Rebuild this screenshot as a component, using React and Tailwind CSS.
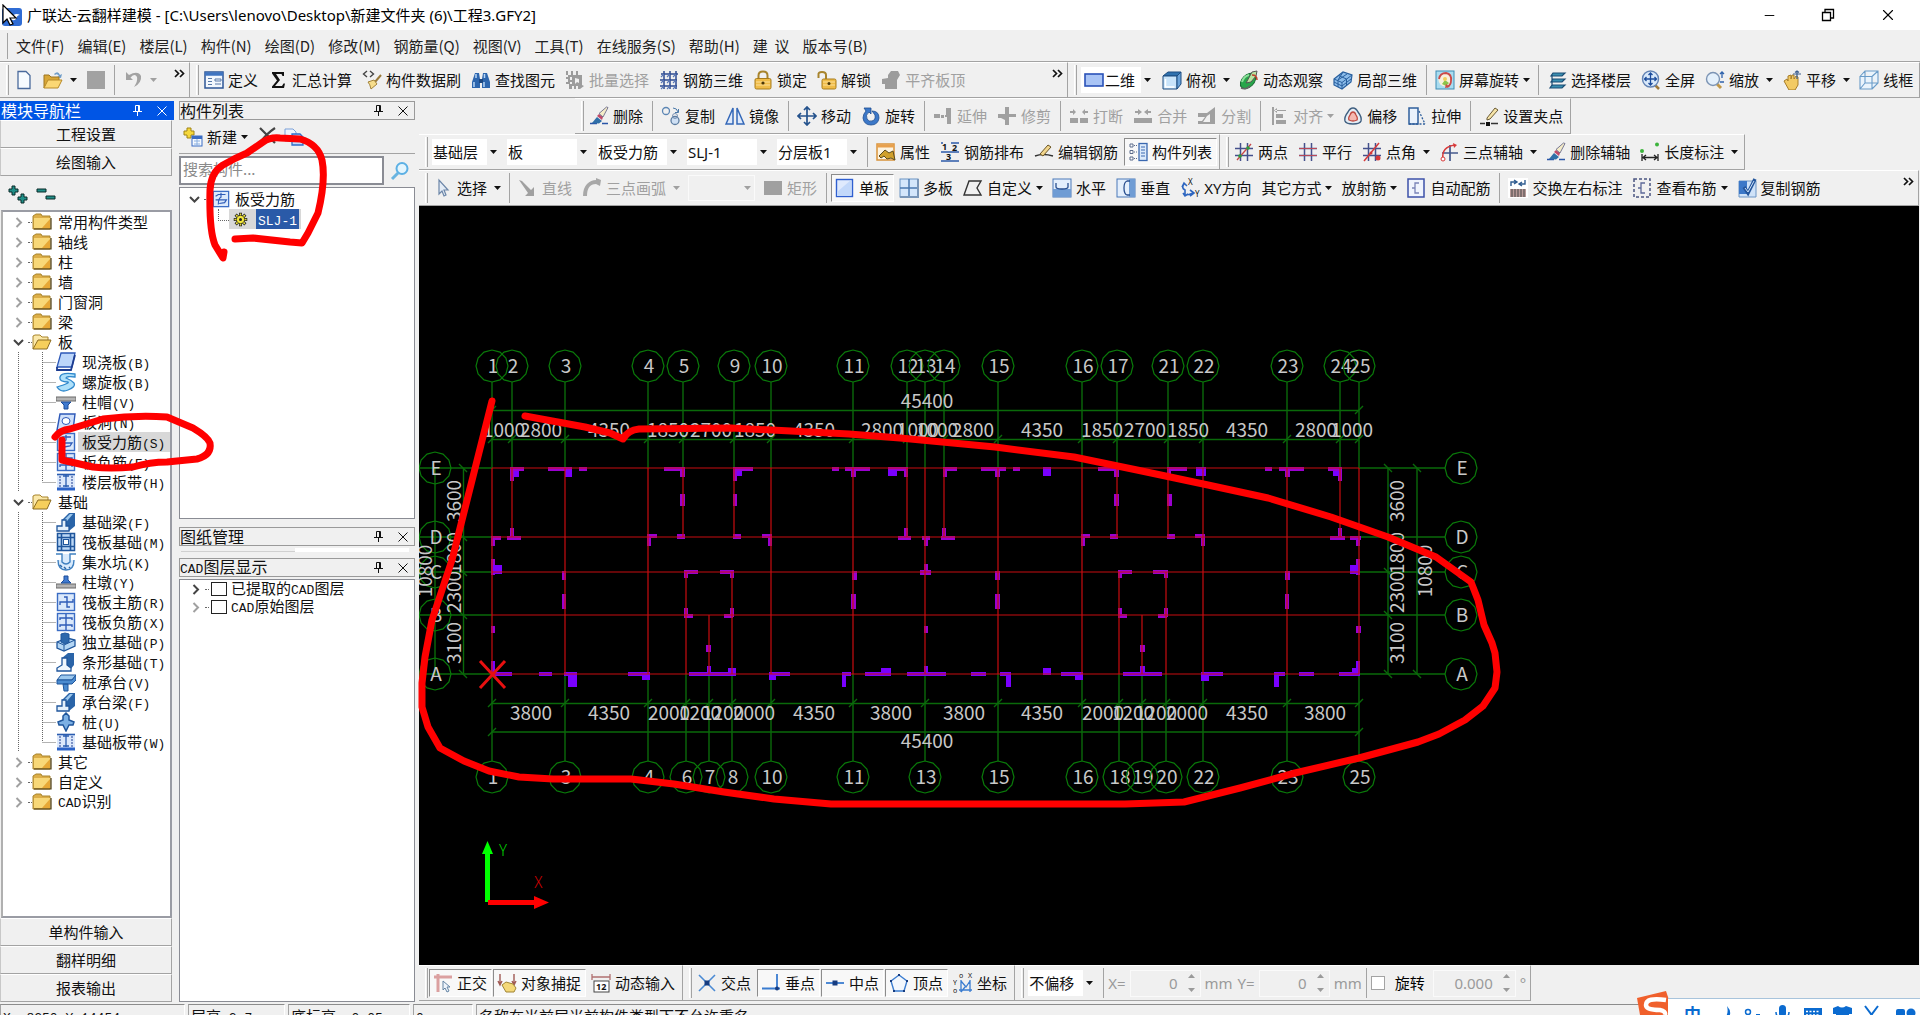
import { Fragment } from 'react';
import { Minus, X } from 'lucide-react';

const UI = "font-['Noto_Sans','Noto_Sans_CJK_SC',sans-serif]";
const CJK = "font-['Noto_Sans_CJK_SC',sans-serif]";

/* ---------- Iconos (cuadrícula 20x20) ---------- */

const eraser = (
  <>
    <path d="M1 17.500h7M13 17.500h6" stroke="#2a56a8" strokeWidth="1.500" />
    <path d="M3 17l5-6 5 4-3 2.500z" fill="#2f6fa8" />
    <path d="M8 10l5 4 1-3-4-3z" fill="#c04a68" />
    <path d="M10 7.500l4 3.500 5-9.500-1.500-.5z" fill="#f4ecc8" stroke="#5a5a80" strokeWidth=".8" />
  </>
);

const bluePlate = <rect x="1.500" y="1.500" width="17" height="17" fill="#dbe9fb" stroke="#3a6cc4" strokeWidth="1.400" />;

const gridLines = <path d="M6.500 1v18M13.500 1v18M1 6.500h18M1 13.500h18" stroke="#44508c" strokeWidth="1.500" fill="none" />;

const beam = (
  <>
    <path d="M6 8l7-7h6v13l-6 5z" fill="#2a64a8" />
    <path d="M8 8l6-6h3l-6 7z" fill="#9cc8ee" />
    <path d="M1 19v-5h5V8h4v6h3v5z" fill="#e4f0fc" stroke="#1f569c" strokeWidth="1.300" />
  </>
);

const strip = (
  <>
    <rect x="1" y="2" width="18" height="16" fill="#dce8fb" />
    <path d="M1 2.500h18" stroke="#2a5cb0" strokeWidth="1.600" />
    <path d="M1 17h18" stroke="#2a62c8" strokeWidth="3" />
    <path d="M4 4v11M16 4v11" stroke="#1c3c90" strokeDasharray="2 1" />
    <path d="M10 3v12M7 4h6M7 14h6" stroke="#2a5cb0" strokeWidth="1.300" />
  </>
);

const ICONS = {
  newDoc: <path d="M4 1.500h8l4 4v13H4z" fill="#f7fbff" stroke="#4a6a9c" strokeWidth="1.300" />,
  open: (
    <>
      <path d="M11 4q4-4 6 1l2-1-1 4-4-1 2-1q-2-3-4-1z" fill="#6f9cc8" />
      <path d="M1 18V5h5l2 2h8v4H6z" fill="#d8a636" stroke="#9c7420" />
      <path d="M1 18l4-8h14l-4 8z" fill="#fbd774" stroke="#b88a28" />
    </>
  ),
  save: <rect x="1" y="1" width="18" height="18" fill="#a2a2a2" />,
  undo: <path d="M3 2v8h7L7.500 7.500Q12 3 14 7q1 4-3 10 8-4 7-11Q15 0 6 5z" fill="#a2a2a2" />,
  define: (
    <>
      <rect x="1" y="2" width="18" height="16" fill="#f2f7fd" stroke="#2c5696" strokeWidth="1.500" />
      <path d="M1 4h18" stroke="#3f74c0" strokeWidth="3.500" />
      <path d="M4 8.500h4M4 11.500h4M4 14.500h4M11 9h6v2h-6zM11 14h6" stroke="#5879a8" fill="none" />
    </>
  ),
  sigma: <path d="M4 2h12v4h-1.500L13.500 4H8l4 6-5 6h7l1.500-2.500H17L16 18H4v-1.500L9 10.500 4 3.500z" fill="#111" />,
  brush: (
    <>
      <path d="M5 1L1.500 4 5 7M8 1l3.500 3L8 7" stroke="#444" strokeWidth="1.400" fill="none" />
      <path d="M19 5l-6 7" stroke="#9a7a3a" strokeWidth="2" />
      <path d="M6 12l6-2 3 4-6 5q-1-5-3-7z" fill="#f6dd8c" stroke="#a2823a" />
    </>
  ),
  binoculars: (
    <>
      <path d="M1 18v-6L4 3h4l1 6v9zM11 18V9l1-6h4l3 9v6z" fill="#2d66ae" />
      <path d="M3 12v5M13 12v5M5 4v4M13.500 4v4" stroke="#b8d6f6" strokeWidth="1.500" />
      <path d="M8 9h4v4H8z" fill="#1c4780" />
    </>
  ),
  batch: <path d="M1 1h2v4h3V1h2v4h3V1h2v4h4v10l2 1-4 3h-2v-3h-2v3H9v-3H7v3H4v-5H1v-2h2v-3H1V7h2V5H1zM5 7v3h2V7zM5 12v2h2v-2zM10 8v6l2-2 2 1V9z" fillRule="evenodd" fill="#9c9c9c" />,
  rebar3d: (
    <>
      <path d="M2 4h17M1 10h17M1 16h17M5 1v18M11 1v18M17 1v18" stroke="#2c4a90" strokeWidth="1.500" fill="none" />
      <path d="M2 7l3-3M8 7l3-3M14 7l3-3M2 13l3-3M8 13l3-3M14 13l3-3M2 19l3-3M8 19l3-3M14 19l3-3" stroke="#5a78b8" strokeWidth="1.100" fill="none" />
    </>
  ),
  lock: (
    <>
      <path d="M5.500 9V5.500q0-4 4.500-4t4.500 4V9" stroke="#a8842c" strokeWidth="2" fill="none" />
      <rect x="2" y="8.500" width="16" height="10.500" rx="1.500" fill="#f0bc48" stroke="#a87c1c" />
      <path d="M3 12h14M3 15h14" stroke="#fce09a" />
      <circle cx="10" cy="13" r="1.600" fill="#4a3608" />
    </>
  ),
  unlock: (
    <>
      <path d="M9 10V5q0-3-4-3T1.500 5v3" stroke="#a8842c" strokeWidth="2" fill="none" />
      <rect x="5" y="9" width="14" height="10" rx="1.500" fill="#f0bc48" stroke="#a87c1c" />
      <path d="M6 12h12M6 15h12" stroke="#fce09a" />
      <circle cx="12" cy="13.500" r="1.500" fill="#4a3608" />
    </>
  ),
  flush: <path d="M1 14V9l6-1V5l3-4h7l2 4-3 5v9H4v-5z" fill="#9c9c9c" />,
  rect2d: <rect x="1" y="4" width="18" height="12" fill="#a9c4f5" stroke="#2a52b8" strokeWidth="1.600" />,
  cube: (
    <>
      <path d="M1 6l5-4h13l-4 4z" fill="#2f71ae" stroke="#1c4c80" />
      <path d="M1 6h14v13H1z" fill="#c9e4fa" stroke="#1c4c80" />
      <path d="M15 6l4-4v12l-4 5z" fill="#6aa2d8" stroke="#1c4c80" />
      <path d="M3.500 9v8h9" stroke="#fff" strokeWidth="1.500" fill="none" />
    </>
  ),
  orbit: (
    <>
      <ellipse cx="9" cy="11" rx="9" ry="6" transform="rotate(-45 9 11)" fill="#27a64a" stroke="#1a6a34" />
      <path d="M3 12q2-6 7-7" stroke="#8ce09a" strokeWidth="2" fill="none" />
      <path d="M7 13l6-11 5-1-1 5-5 6z" fill="#b8e4a0" stroke="#555" />
      <path d="M13 5q5 0 5 5" stroke="#c0402a" strokeWidth="1.500" fill="none" />
      <path d="M2 18q5 2 9-2" stroke="#666" strokeWidth="1.500" fill="none" />
    </>
  ),
  local3d: (
    <>
      <path d="M1 9l9-7 9 3-1 7-9 7-8-4z" fill="#8cbcea" stroke="#285f9e" strokeWidth="1.200" />
      <path d="M1 9l8 3.500L19 5M9 12.500V19M5.500 5.500l8 3.500v6M1 12l8 4 9-7M5 10.500V17M10 2l-5 8M14 4l-9 6" stroke="#285f9e" fill="none" />
    </>
  ),
  screenRotate: (
    <>
      <rect x="1" y="1" width="18" height="18" fill="#a9dcf0" stroke="#3c8cb4" />
      <circle cx="10" cy="10" r="6.500" fill="#f8f0dc" />
      <path d="M4 9q1-6 7-6 6 1 5 8 0 4-4 6" stroke="#cc4a48" strokeWidth="1.800" fill="none" />
      <path d="M7 14l3-4 4 3-3 3z" fill="#8cc44a" />
      <circle cx="10" cy="9" r="2" fill="#f2ce5c" />
      <path d="M10 18l1-4 4 3z" fill="#cc4a48" />
    </>
  ),
  floors: <path d="M6 3h12l-3 3H4zM6 9h12l-3 3H4zM5 15h13l-3 3H3zM5 5v5M5 11v5" fill="#3a8fb0" stroke="#1a4c74" strokeWidth="1.200" />,
  fullscreen: (
    <>
      <path d="M14 15l4 4" stroke="#a07a3c" strokeWidth="2.500" />
      <circle cx="9.500" cy="9" r="8" fill="#d9e9fa" stroke="#6484b4" strokeWidth="1.400" />
      <path d="M9.500 3v12M3.500 9h12M7.500 5l2-2 2 2M7.500 13l2 2 2-2M5.500 7l-2 2 2 2M13.500 7l2 2-2 2" stroke="#1c4c9c" strokeWidth="1.300" fill="none" />
    </>
  ),
  zoomTool: (
    <>
      <path d="M12 14l4 4" stroke="#c09848" strokeWidth="3" />
      <circle cx="8" cy="9" r="6.500" fill="#e4f0fb" stroke="#7c94b4" strokeWidth="1.400" />
      <path d="M17 2v6M15 4l2-2 2 2M15 12h4" stroke="#2e62ac" strokeWidth="1.300" fill="none" />
    </>
  ),
  pan: (
    <>
      <path d="M2 11l3-2 1 2V6l3-1v4l1-4h2v4l2-3 2 1v8l-3 5H7z" fill="#f2ca64" stroke="#a67c28" />
      <path d="M15 1v8M11 4h8M13 2.500L15 1l2 1.500" stroke="#3a5c8c" strokeWidth="1.200" fill="none" />
    </>
  ),
  wireframe: <path d="M1 6.500h12V19H1zM1 6.500L6 1h13v12l-6 6M13 6.500L19 1M6 1v12h13M6 13l-5 6" stroke="#6a9cc8" strokeWidth="1.100" fill="#eaf4fc" />,
  eraser,
  copy: (
    <>
      <circle cx="5" cy="5" r="3.500" fill="none" stroke="#5c86b4" strokeWidth="1.300" />
      <circle cx="14" cy="14.500" r="4" fill="#cfe0f4" stroke="#5c7ca0" strokeWidth="1.300" />
      <circle cx="14" cy="10" r="2.500" fill="none" stroke="#7c94b4" />
      <path d="M12 2q4 0 5 4M17.500 3v3.500H14" stroke="#4a78a8" fill="none" />
    </>
  ),
  mirror: <path d="M8 2v16H1zM12 2v16h7z" fill="#dfeafb" stroke="#3468b8" strokeWidth="1.500" />,
  move: <path d="M10 1v18M1 10h18M7 4l3-3 3 3M7 16l3 3 3-3M4 7l-3 3 3 3M16 7l3 3-3 3" stroke="#24528c" strokeWidth="1.700" fill="none" />,
  rotate: <path d="M3 2h7v6L8 6q-4 3-2 7 2 3 5 2 4-1 3-6l-3-4q7 0 7 7-1 7-8 7-7 0-8-7 0-4 3-7z" fill="#3c78c8" stroke="#1c4c90" strokeWidth=".8" />,
  extend: <path d="M1 8h6v4H1zM8 9h3v3H8zM13 2h5v16h-4v-7h-2V9h1z" fill="#a0a0a0" />,
  trim: <path d="M8 1h4v7h7v3h-7v8H8v-5l-4-2H1V8h7z" fill="#a0a0a0" />,
  breakIt: <path d="M1 12h8v5H1zM11 12h8v5h-8zM1 5h3V3l3 3-3 3V7H1zM19 5h-3V3l-3 3 3 3V7h3z" fill="#a0a0a0" />,
  merge: <path d="M1 12h18v5H1zM2 5h3V3l4 3-4 3V7H2zM18 5h-3V3l-4 3 4 3V7h3z" fill="#a0a0a0" />,
  split: <path d="M1 7h9l8-6v17H1v-3h4l3-4H1zM10 10l-4 6h7V8z" fill="#a0a0a0" />,
  align: <path d="M3 1h2v18H3zM6 4h11v1H6zM7 8h7v4H7zM7 14h10v4H7zM8 2l-3 2.500 3 2.500z" fill="#a0a0a0" />,
  offset: (
    <>
      <path d="M10 2q3 0 5 4 4 5 3 9-1 3-8 3t-8-3q-1-4 3-9 2-4 5-4z" fill="#e6edf4" stroke="#3f5f80" strokeWidth="1.400" />
      <path d="M10 6q2 0 3 3 2 3 1 5-4 2-8 0-1-2 1-5 1-3 3-3z" fill="#f6b8b0" stroke="#c04a40" strokeWidth="1.300" />
    </>
  ),
  stretch: (
    <>
      <path d="M2 2h9v16H2z" fill="#eaf2fc" stroke="#2f5f9c" strokeWidth="1.500" />
      <path d="M12 5l6 13M2 18h17" stroke="#2f5f9c" strokeDasharray="2 1.500" strokeWidth="1.300" />
    </>
  ),
  grip: (
    <>
      <path d="M1 17.500h5M12 17.500h7" stroke="#333" strokeWidth="1.300" />
      <path d="M7 16h4v4H7z" fill="#111" />
      <path d="M8 12l8-10 3 2-8 9-3 1z" fill="#f6e4a8" stroke="#6a5a34" />
    </>
  ),
  props: (
    <>
      <rect x="1" y="2" width="17" height="16" fill="#fdf3df" stroke="#d8923a" strokeWidth="1.500" />
      <path d="M1 4h17" stroke="#e8a04c" strokeWidth="3" />
      <path d="M3 14l6-6 4 3 4-2 2 9-4-2-4 1-3-3-3 2z" fill="#d0a02c" stroke="#5a4a1c" />
    </>
  ),
  arrange: (
    <>
      <path d="M1 10h18M1 19h18M11 1h8M1 1h2" stroke="#2c5aa8" strokeWidth="1.300" />
      <g fill="#111" fontSize="9" fontWeight="700">
        <text x="2" y="8">1</text>
        <text x="12" y="9">2</text>
        <text x="6" y="18">3</text>
      </g>
    </>
  ),
  editBar: (
    <>
      <path d="M1 14q8-3 18 0" stroke="#333" strokeWidth="1.500" fill="none" />
      <path d="M6 12l8-9 3 2-8 9z" fill="#f2d68c" stroke="#6a5424" />
    </>
  ),
  list: (
    <>
      <rect x="11" y="1.500" width="8" height="17" fill="#dceafb" stroke="#3a68b0" strokeWidth="1.300" />
      <path d="M13 5h4M13 8h4M13 11h4M13 14h4" stroke="#3a68b0" />
      <path d="M2 2h3v3H2zM2 8.500h3v3H2zM2 15h3v3H2z" fill="#fff" stroke="#5a6a8a" />
      <path d="M6 3.500h4M6 10h4M6 16.500h4" stroke="#5a6a8a" strokeDasharray="1 1" />
    </>
  ),
  twoPoint: (
    <>
      {gridLines}
      <path d="M3 18L17 2" stroke="#c84848" strokeWidth="1.300" />
      <circle cx="6" cy="14" r="1.800" fill="#2c9c3c" /><circle cx="14" cy="6" r="1.800" fill="#2c9c3c" />
    </>
  ),
  parallel: (
    <>
      {gridLines}
      <path d="M1 6.500h18M1 13.500h18" stroke="#b84858" strokeWidth="1.200" />
    </>
  ),
  pointAngle: (
    <>
      {gridLines}
      <path d="M2 19L17 1" stroke="#d83a3a" strokeWidth="1.500" />
      <circle cx="16" cy="16" r="2.500" fill="#d83a3a" /><circle cx="9" cy="11" r="1.500" fill="#d83a3a" />
    </>
  ),
  threePoint: (
    <>
      <path d="M11 3v16M3 11h16" stroke="#44588c" strokeWidth="1.700" />
      <path d="M4 17Q2 5 16 3" stroke="#d83a3a" strokeWidth="1.500" fill="none" />
      <circle cx="4" cy="17" r="2" fill="#fff" stroke="#d83a3a" /><path d="M14 1l4 2-3 3z" fill="#d83a3a" />
    </>
  ),
  lengthDim: (
    <>
      <path d="M2 12v7M18 12v7M3 15.500h14M6 13l-3 2.500 3 2.500M14 13l3 2.500-3 2.500" stroke="#222" strokeWidth="1.300" fill="none" />
      <circle cx="2" cy="9" r="2" fill="#3cb43c" /><circle cx="17" cy="2.500" r="2" fill="#3cb43c" />
    </>
  ),
  cursor: <path d="M6 2v14l3-3 2 5 2-1-2-5h4z" fill="#e4ecf6" stroke="#6c86a8" strokeWidth="1.200" />,
  line: <path d="M1 2l3 1 9 9 3-3v9H7l3-3z" fill="#a0a0a0" />,
  arc: <path d="M1 18q0-8 4-12 4-4 9-4V0l5 2-1 6-4-2Q5 6 5 18z" fill="#a8a8a8" />,
  rectGray: <rect x="1" y="3" width="18" height="14" fill="#a0a0a0" />,
  single: (
    <>
      <rect x="1.500" y="1.500" width="16" height="17" fill="#dfeafd" stroke="#2f5fd0" strokeWidth="1.400" />
      <path d="M2 14l14-12v16H2z" fill="#c2d8fa" />
    </>
  ),
  multi: (
    <>
      <rect x="1" y="1" width="18" height="18" fill="#d4e6fb" stroke="#6a94c4" />
      <path d="M10 1v18M1 10h18" stroke="#4a78b0" strokeWidth="1.500" />
      <path d="M19 1v18H1" stroke="#7a96b8" strokeWidth="2" fill="none" />
    </>
  ),
  custom: <path d="M6 3h12l-4 7 4 7H1z" fill="none" stroke="#333" strokeWidth="1.400" />,
  horiz: (
    <>
      <rect x="1" y="1" width="18" height="18" fill="#e4effc" stroke="#4a78b8" />
      <path d="M1 11h18v8H1z" fill="#6f9cd4" />
      <path d="M4 5v4q0 2 6 2t6-2V5" stroke="#2a5090" strokeWidth="1.300" fill="none" />
    </>
  ),
  vert: (
    <>
      <rect x="1" y="1" width="18" height="18" fill="#e4effc" stroke="#4a78b8" />
      <path d="M13 1h6v18h-6z" fill="#6f9cd4" />
      <path d="M14 3h-3Q8 4 8 10t3 7h3" stroke="#2a5090" strokeWidth="1.300" fill="none" />
    </>
  ),
  xy: (
    <>
      <path d="M4 6q-3 4 1 6v5q4 0 8-2M2 9l2-4 3 3M3 15l2 3 3-2M10 12l4 3-4 3" stroke="#2e66c0" strokeWidth="1.600" fill="none" />
      <g fill="#111" fontSize="8">
        <text x="8" y="7">X</text>
        <text x="15" y="19">Y</text>
      </g>
    </>
  ),
  auto: (
    <>
      <rect x="2" y="1" width="16" height="18" fill="#f0f4fd" stroke="#3c50a8" strokeWidth="1.500" />
      <path d="M13 5H9v10h4M9 10H6" stroke="#7a84b8" strokeWidth="1.300" fill="none" />
    </>
  ),
  swap: (
    <>
      <rect width="20" height="20" fill="#fff" />
      <path d="M3 8V4h5M6 2l3 2-3 2M17 2v4h-5M14 4l-3 2 3 2" stroke="#2f5c90" strokeWidth="1.400" fill="none" />
      <path d="M2 11h16v8H2z" fill="#b89a98" />
      <path d="M4 11v8M7 11v8M10 11v8M13 11v8M16 11v8" stroke="#444" />
    </>
  ),
  view: (
    <>
      <path d="M2 1h16v18H2z" fill="none" stroke="#4a5480" strokeWidth="1.500" strokeDasharray="3 2" />
      <path d="M13 5H9v10h4M9 10H6" stroke="#5c6898" strokeWidth="1.300" fill="none" />
    </>
  ),
  copyBar: (
    <>
      <path d="M2 3h17v16H2z" fill="#cfe2f8" stroke="#6a94c4" />
      <path d="M2 3h8v13H2z" fill="#3c78c8" />
      <path d="M7 9l4 6L18 1" stroke="#24569c" strokeWidth="3.500" fill="none" />
      <path d="M8 10l3 4 6-11" stroke="#cfe2f8" fill="none" />
    </>
  ),
  ortho: (
    <>
      <path d="M1 4h18M5 1v18" stroke="#dba0a0" strokeWidth="3" />
      <path d="M10 8v9l2-2 2 4 2-1-2-4h3z" fill="#eef4fb" stroke="#6484a4" />
    </>
  ),
  snap: (
    <>
      <path d="M3 1v12M17 1v9M1 8l2 4 2-4M15 8l2 4 2-4" stroke="#a05a54" strokeWidth="1.400" fill="none" />
      <path d="M5 12l4-3 7 2 3 4-2 4H9z" fill="#f4d878" stroke="#a08434" />
    </>
  ),
  dynInput: (
    <>
      <path d="M1 1v6M19 1v6M1 4h18" stroke="#b07070" strokeWidth="1.300" fill="none" />
      <rect x="3" y="8" width="15" height="11" fill="#fff" stroke="#444" />
      <text x="5" y="17" fontSize="9" fontWeight="700" fill="#111">12</text>
    </>
  ),
  cross: (
    <>
      <path d="M2 2l16 16M18 2L2 18" stroke="#4a8ad4" strokeWidth="1.600" fill="none" />
      <rect x="7.500" y="7.500" width="5" height="5" fill="#163c80" />
    </>
  ),
  perp: (
    <>
      <path d="M16 1v15M1 15.500h18" stroke="#3a7cd0" strokeWidth="1.800" />
      <circle cx="16" cy="15.500" r="2" fill="#163c80" />
    </>
  ),
  mid: (
    <>
      <path d="M1 10h18" stroke="#3a7cd0" strokeWidth="1.800" />
      <rect x="7.500" y="7.500" width="5" height="5" fill="#163c80" />
    </>
  ),
  vertex: (
    <>
      <path d="M10 2l8 6-3 10H5L2 8z" fill="#f2f7fd" stroke="#3a7cd0" strokeWidth="1.400" />
      <path d="M9 1h2v2H9zM17 7h2v2h-2zM1 7h2v2H1zM4 17h2v2H4zM14 17h2v2h-2z" fill="#163c80" />
    </>
  ),
  coord: (
    <>
      <path d="M8 7v12M6 17h13M8 8l5 6 4-6M17 7v12M12 14l-4 5" stroke="#3a7cd0" strokeWidth="1.300" fill="none" />
      <g fill="#111" fontSize="7">
        <text x="0" y="12">Y</text><text x="15" y="5">X</text>
        <text x="6" y="5">o</text><text x="0" y="20">o</text>
      </g>
    </>
  ),
  addNew: (
    <>
      <path d="M4 1h4v3h3v4H8v3H4V8H1V4h3z" fill="#f6d83c" stroke="#a08414" />
      <rect x="9" y="9" width="10" height="10" fill="#f4f9ff" stroke="#3a6cc4" />
      <path d="M9 10.500h10" stroke="#3a6cc4" strokeWidth="3" />
      <path d="M11 14h6M11 17h6M14 12v7" stroke="#8cb0e0" />
    </>
  ),
  remove: <path d="M2 1l15 15M17 1Q8 7 2 16" stroke="#444" strokeWidth="2.200" fill="none" />,
  copyDoc: (
    <>
      <path d="M1 2h8l3 3v9H1z" fill="#eef4fd" stroke="#7aa0d8" />
      <path d="M8 7h8l3 3v8H8z" fill="#c2dafa" stroke="#2f6cc8" strokeWidth="1.300" />
    </>
  ),
  search: (
    <>
      <path d="M2 18l6-6" stroke="#6ab4e0" strokeWidth="3" />
      <circle cx="12" cy="7.500" r="5.500" fill="#e4f5fd" stroke="#5cb0e4" strokeWidth="2" />
    </>
  ),
  expand: <path d="M4 1h3v3h3v3H7v3H4V7H1V4h3zM13 9h3v3h3v3h-3v3h-3v-3h-3v-3h3z" fill="#1f8f88" stroke="#0a2a28" />,
  collapse: <path d="M1 4h9v3H1zM10 11h9v3h-9z" fill="#1f8f88" stroke="#0a2a28" />,
  folder: (
    <>
      <path d="M1 17V4l3-2h5l1 2h8v13z" fill="#dcae48" stroke="#a8842c" />
      <path d="M2 16V6h16v10z" fill="#f8d878" />
      <path d="M2 17h17V6" stroke="#4a3a10" strokeWidth="1.200" fill="none" />
      <path d="M10 16l8-9v9z" fill="#e6a836" />
    </>
  ),
  folderOpen: (
    <>
      <path d="M1 17V4l2-1h5l2 2h6v3" fill="#fbe8a8" stroke="#a8842c" />
      <path d="M1 17L6 8h13l-4 9z" fill="#f6cf5c" stroke="#8c6c20" />
    </>
  ),
  slab: (
    <>
      <path d="M5 1h14l-3 14H1z" fill="#bcd6fa" stroke="#2c58b8" strokeWidth="1.300" />
      <path d="M1 15v3h14l4-15" fill="none" stroke="#1c3c90" strokeWidth="1.800" />
    </>
  ),
  spiral: <path d="M19 2Q5 0 4 5t8 5q2 1-11 5 4 6 11 3 8-3 6-7-3-3-8-5 0-2 9-1z" fill="#aee0fa" stroke="#2f88cc" strokeWidth="1.300" />,
  cap: (
    <>
      <rect y="5" width="20" height="4" fill="#b4b4b4" stroke="#6a6a6a" />
      <path d="M5 10h10l-3 3v4H8v-4z" fill="#3f7ad0" stroke="#1c4c98" />
    </>
  ),
  hole: (
    <>
      <path d="M4 2h15l-2 16H1z" fill="#cfe0fa" stroke="#2c58b8" strokeWidth="1.400" />
      <ellipse cx="10" cy="9" rx="4" ry="3.500" fill="#fff" stroke="#2c58b8" />
    </>
  ),
  slabBar: (
    <>
      {bluePlate}
      <path d="M4 7l3-2h8M4 11h12l-2 3-6 1M10 3v5q-3 1-3 8" stroke="#2f5cb8" strokeWidth="1.300" fill="none" />
    </>
  ),
  mainBar: (
    <>
      {bluePlate}
      <path d="M8 5h3v10h3M4 13v-3h13V7" stroke="#2f5cb8" strokeWidth="1.400" fill="none" />
    </>
  ),
  negBar: (
    <>
      {bluePlate}
      <path d="M10 2v16M4 8v-2h12v2M4 15v-2h12v2" stroke="#2f5cb8" strokeWidth="1.400" fill="none" />
    </>
  ),
  strip,
  beam,
  raft: (
    <>
      <rect x="1.500" y="1.500" width="17" height="17" fill="#bcd8f6" stroke="#1f569c" strokeWidth="1.500" />
      <path d="M5.500 1v18M14.500 1v18M1 5.500h18M1 14.500h18" stroke="#1f569c" strokeWidth="1.600" />
      <rect x="7.500" y="7.500" width="5" height="5" fill="#fff" stroke="#1f569c" />
    </>
  ),
  pit: (
    <>
      <path d="M0 2h6v8q4 4 8 0V2h6M2 8q0 10 8 10t8-10" fill="#d8eafc" stroke="#3f80c0" strokeWidth="1.400" />
      <path d="M4 13l2 2M8 15l2 2M13 15l1 1" stroke="#2a66a8" strokeWidth="1.500" />
    </>
  ),
  pier: (
    <>
      <rect y="12" width="20" height="4" fill="#b4b4b4" stroke="#6a6a6a" />
      <path d="M5 11l3-3V4h4v4l3 3z" fill="#3f7ad0" stroke="#1c4c98" />
    </>
  ),
  isolated: (
    <>
      <path d="M1 10l10-4 8 2v6l-11 5-7-3z" fill="#b4d6f4" stroke="#1f569c" strokeWidth="1.300" />
      <path d="M1 10l7 3 11-5M8 13v6" stroke="#1f569c" />
      <path d="M5 2l4-1 4 1v8l-4 2-4-2z" fill="#2d68ac" stroke="#1f569c" />
    </>
  ),
  stripF: (
    <>
      <path d="M6 6l6-5h6v12l-4 5z" fill="#2a64a8" />
      <path d="M1 19v-3l5-3V6h5v7l4 3v3z" fill="#f0f7fd" stroke="#1f569c" strokeWidth="1.300" />
    </>
  ),
  pileCap: (
    <>
      <path d="M1 8l4-5h15l-4 5z" fill="#9cc8ee" stroke="#1f569c" />
      <path d="M1 8h15l4-5v5l-4 4H1zM7 12h5v7H8z" fill="#4c8cd0" stroke="#1f569c" />
    </>
  ),
  pile: <path d="M7 8V4l3-3 3 3v4l5 2-1 3h-4l-3 6-3-6H3l-1-3z" fill="#7cb0e4" stroke="#1f569c" strokeWidth="1.500" />,
  gear: (
    <>
      <path d="M10 1v18M1 10h18M3.500 3.500l13 13M16.500 3.500l-13 13" stroke="#222" strokeWidth="4" />
      <path d="M10 2v16M2 10h16M4.200 4.200l11.600 11.600M15.800 4.200L4.200 15.800" stroke="#f4e83c" strokeWidth="2" />
      <circle cx="10" cy="10" r="5.500" fill="#f4e83c" stroke="#222" /><circle cx="10" cy="10" r="2" fill="#222" />
    </>
  ),
};

function Icon({ name, className = 'size-5' }) {
  return (
    <svg className={`${className} shrink-0`} viewBox="0 0 20 20" fill="none" aria-hidden="true">
      {ICONS[name]}
    </svg>
  );
}

function Caret({ muted }) {
  return (
    <svg className="w-[7px] h-1 shrink-0" viewBox="0 0 7 4" aria-hidden="true">
      <path d="M0 0h7L3.500 4z" fill={muted ? '#a0a0a0' : '#111'} />
    </svg>
  );
}

/* ---------- Piezas de las barras ---------- */

function Bar({ className = '', children }) {
  return (
    <div className={`flex h-9 items-center gap-px pl-1.5 pr-0.5 border-t border-t-white border-b border-r border-b-[#a3a3a3] border-r-[#a3a3a3] ${className}`}>
      <span className="h-[30px] w-[3px] shrink-0 border-l border-l-white border-r border-r-[#a3a3a3]" />
      {children}
    </div>
  );
}

function Sep() {
  return <span className="h-[30px] w-px shrink-0 mx-[3px] bg-[#a3a3a3]" />;
}

// caret: 'tight' pegado al texto, 'split' separado
function Tool({ icon, label, title, caret, muted, pressed }) {
  const state = pressed
    ? 'border-t-[#8c8c8c] border-l-[#8c8c8c] border-b-white border-r-white bg-[#f8f8f8]'
    : 'border-transparent';
  return (
    <button
      type="button"
      disabled={muted}
      aria-pressed={pressed}
      aria-label={title}
      className={`flex h-7 shrink-0 items-center border px-[3px] whitespace-pre ${state} ${muted ? 'text-[#a0a0a0]' : 'text-[#111]'}`}
    >
      {icon && <Icon name={icon} />}
      {label && <span className={icon ? 'ml-1' : ''}>{label}</span>}
      {caret && (
        <span className={caret === 'split' ? 'ml-[7px]' : 'ml-1'}>
          <Caret muted={muted} />
        </span>
      )}
      {!caret && icon && label && <span className="w-px" />}
    </button>
  );
}

function Tools({ items }) {
  return items.map((it, i) => (it === '|' ? <Sep key={i} /> : <Tool key={i} {...it} />));
}

function Combo({ label, value, width, icon, muted }) {
  return (
    <span className={`flex h-[26px] shrink-0 items-center mx-[3px] ${width} ${muted ? 'bg-[#f0f0f0] border border-[#fafafa]' : 'bg-white'}`}>
      {icon && <span className="pl-[3px]"><Icon name={icon} /></span>}
      <select aria-label={label} disabled={muted} className="min-w-0 flex-1 appearance-none bg-transparent pl-px text-[#111] outline-none">
        <option>{value}</option>
      </select>
      <span className="flex h-full w-[13px] items-center justify-center bg-[#f0f0f0]">
        <Caret muted={muted} />
      </span>
    </span>
  );
}

function More() {
  return (
    <button type="button" aria-label="更多" className="ml-auto mr-0.5 mt-1.5 self-start">
      <svg className="w-[11px] h-[9px]" viewBox="0 0 11 9" fill="none" stroke="#111" strokeWidth="1.700">
        <path d="M1 1l3.500 3.500L1 8M6 1l3.500 3.500L6 8" />
      </svg>
    </button>
  );
}

function Spin({ label, value, width }) {
  return (
    <span className={`flex h-[27px] shrink-0 items-center mx-[3px] border border-[#fafafa] pr-[5px] ${width}`}>
      <input aria-label={label} defaultValue={value} disabled className="min-w-0 flex-1 bg-transparent pr-[10px] text-right text-[#9a9a9a]" />
      <svg className="w-[7px] h-5" viewBox="0 0 7 20" fill="#9a9a9a" aria-hidden="true">
        <path d="M0 5l3.500-4L7 5zM0 15l3.500 4L7 15z" />
      </svg>
    </span>
  );
}

/* ---------- Barras superiores ---------- */

const MENUS = ['文件(F)', '编辑(E)', '楼层(L)', '构件(N)', '绘图(D)', '修改(M)', '钢筋量(Q)', '视图(V)', '工具(T)', '在线服务(S)', '帮助(H)', '建  议', '版本号(B)'];

const FILE_TOOLS = [
  { icon: 'newDoc', title: '新建' }, { icon: 'open', title: '打开', caret: 'split' }, { icon: 'save', title: '保存', muted: true },
  '|', { icon: 'undo', title: '撤销', caret: 'split', muted: true },
];
const DATA_TOOLS = [
  { icon: 'define', label: '定义' }, { icon: 'sigma', label: '汇总计算' }, { icon: 'brush', label: '构件数据刷' },
  { icon: 'binoculars', label: '查找图元' }, { icon: 'batch', label: '批量选择', muted: true }, { icon: 'rebar3d', label: '钢筋三维' },
  { icon: 'lock', label: '锁定' }, { icon: 'unlock', label: '解锁' }, { icon: 'flush', label: '平齐板顶', muted: true },
];
const VIEW_TOOLS = [
  { icon: 'cube', label: '俯视', caret: 'split' }, { icon: 'orbit', label: '动态观察' }, { icon: 'local3d', label: '局部三维' },
  '|', { icon: 'screenRotate', label: '屏幕旋转', caret: 'tight' },
  '|', { icon: 'floors', label: '选择楼层' }, { icon: 'fullscreen', label: '全屏' }, { icon: 'zoomTool', label: '缩放', caret: 'split' },
  { icon: 'pan', label: '平移', caret: 'split' }, { icon: 'wireframe', label: '线框' },
];
const EDIT_TOOLS = [
  { icon: 'eraser', label: '删除' }, '|', { icon: 'copy', label: '复制' }, { icon: 'mirror', label: '镜像' },
  '|', { icon: 'move', label: '移动' }, { icon: 'rotate', label: '旋转' },
  '|', { icon: 'extend', label: '延伸', muted: true }, { icon: 'trim', label: '修剪', muted: true },
  '|', { icon: 'breakIt', label: '打断', muted: true }, { icon: 'merge', label: '合并', muted: true }, { icon: 'split', label: '分割', muted: true },
  '|', { icon: 'align', label: '对齐', muted: true, caret: 'tight' }, { icon: 'offset', label: '偏移' }, { icon: 'stretch', label: '拉伸' },
  '|', { icon: 'grip', label: '设置夹点' },
];
const MEMBER_TOOLS = [
  '|', { icon: 'props', label: '属性' }, { icon: 'arrange', label: '钢筋排布' }, { icon: 'editBar', label: '编辑钢筋' },
  { icon: 'list', label: '构件列表', pressed: true },
];
const AXIS_TOOLS = [
  { icon: 'twoPoint', label: '两点' }, { icon: 'parallel', label: '平行' }, { icon: 'pointAngle', label: '点角', caret: 'split' },
  { icon: 'threePoint', label: '三点辅轴', caret: 'split' }, { icon: 'eraser', label: '删除辅轴' }, { icon: 'lengthDim', label: '长度标注', caret: 'split' },
];
const DRAW_TOOLS_A = [
  { icon: 'cursor', label: '选择', caret: 'split' }, '|',
  { icon: 'line', label: '直线', muted: true }, { icon: 'arc', label: '三点画弧', muted: true, caret: 'split' },
];
const DRAW_TOOLS_B = [
  { icon: 'rectGray', label: '矩形', muted: true }, '|',
  { icon: 'single', label: '单板', pressed: true }, { icon: 'multi', label: '多板' }, { icon: 'custom', label: '自定义', caret: 'tight' },
  { icon: 'horiz', label: '水平' }, { icon: 'vert', label: '垂直' }, { icon: 'xy', label: 'XY方向' },
  { label: '其它方式', caret: 'tight' }, { label: '放射筋', caret: 'tight' }, { icon: 'auto', label: '自动配筋' }, '|',
  { icon: 'swap', label: '交换左右标注' }, { icon: 'view', label: '查看布筋', caret: 'tight' }, { icon: 'copyBar', label: '复制钢筋' },
];

function TitleBar() {
  return (
    <header className="flex h-[30px] shrink-0 items-center bg-white text-black">
      <svg className="size-[22px] shrink-0" viewBox="0 0 22 22" aria-hidden="true">
        <rect x="2" y="4" width="20" height="18" rx="3" fill="#2f6cd4" />
        <path d="M10 14q5-6 10-3-3 0-4 4-3 3-6-1z" fill="#fff" />
        <path d="M3 1v18l4-4 3 6 3-1-3-6h6z" fill="#fff" stroke="#000" strokeWidth="1.200" />
      </svg>
      <h1 className="ml-[5px] flex-1">广联达-云翻样建模 - [C:\Users\lenovo\Desktop\新建文件夹 (6)\工程3.GFY2]</h1>
      <div className="flex items-center gap-11 pr-[23px]">
        <button type="button" aria-label="最小化"><Minus className="size-[15px]" strokeWidth={1.5} /></button>
        <button type="button" aria-label="还原">
          <svg className="size-[14px]" viewBox="0 0 14 14" fill="none" stroke="#000" strokeWidth="1.300">
            <path d="M1.500 4.500h8v8h-8zM4 4V1.500h8.500V10H10" />
          </svg>
        </button>
        <button type="button" aria-label="关闭"><X className="size-[18px]" strokeWidth={1.5} /></button>
      </div>
    </header>
  );
}

/* ---------- Paneles acoplados ---------- */

// Los tramos latinos van en monoespaciada, como en una fuente Song
function Song({ children }) {
  return children.split(/([\x20-\x7e]+)/).map((part, i) =>
    i % 2 ? <span key={i} className="font-['Liberation_Mono',monospace] text-[13px]">{part}</span> : <Fragment key={i}>{part}</Fragment>
  );
}

function PanelHead({ title, active }) {
  return (
    <div className={`flex h-[19px] shrink-0 items-center border pr-1.5 ${active ? 'bg-[#0055e5] border-[#0055e5] text-white' : 'bg-[#f0f0f0] border-[#9a9a9a] text-[#111]'}`}>
      <h2 className="flex-1 text-[16px] leading-[17px] whitespace-nowrap"><Song>{title}</Song></h2>
      <button type="button" aria-label={`固定${title}`} className="mr-[14px]">
        <svg className="size-[11px]" viewBox="0 0 11 11" fill="none" stroke="currentColor">
          <path d="M3.500 6V.5h4V6M6.500 1v5M1 6.500h9M5.500 7v4" />
        </svg>
      </button>
      <button type="button" aria-label={`关闭${title}`}>
        <svg className="size-[10px]" viewBox="0 0 10 10" stroke="currentColor"><path d="M.5.5l9 9M9.500.5l-9 9" /></svg>
      </button>
    </div>
  );
}

function NavButton({ children }) {
  return (
    <button type="button" className="mr-0.5 h-7 shrink-0 border border-t-white border-l-[#c8c8c8] border-b-[#a3a3a3] border-r-[#a3a3a3] text-[#111]">
      {children}
    </button>
  );
}

const TREE = [
  { label: '常用构件类型' }, { label: '轴线' }, { label: '柱' }, { label: '墙' }, { label: '门窗洞' }, { label: '梁' },
  {
    label: '板',
    children: [
      ['slab', '现浇板(B)'], ['spiral', '螺旋板(B)'], ['cap', '柱帽(V)'], ['hole', '板洞(N)'],
      ['slabBar', '板受力筋(S)'], ['negBar', '板负筋(F)'], ['strip', '楼层板带(H)'],
    ],
  },
  {
    label: '基础',
    children: [
      ['beam', '基础梁(F)'], ['raft', '筏板基础(M)'], ['pit', '集水坑(K)'], ['pier', '柱墩(Y)'], ['mainBar', '筏板主筋(R)'],
      ['negBar', '筏板负筋(X)'], ['isolated', '独立基础(P)'], ['stripF', '条形基础(T)'], ['pileCap', '桩承台(V)'],
      ['beam', '承台梁(F)'], ['pile', '桩(U)'], ['strip', '基础板带(W)'],
    ],
  },
  { label: '其它' }, { label: '自定义' }, { label: 'CAD识别' },
];

function Chevron({ open, dim }) {
  return (
    <svg className="size-[11px] shrink-0" viewBox="0 0 11 11" fill="none" stroke={dim ? '#a0a0a0' : '#444'} strokeWidth="2" aria-hidden="true">
      <path d={open ? 'M1 3l4.500 4.500L10 3' : 'M3.500 1L8 5.500 3.500 10'} />
    </svg>
  );
}

function Branch({ last }) {
  return (
    <svg className="ml-[15px] w-[38px] h-5 shrink-0" viewBox="0 0 38 20" stroke="#666" strokeDasharray="1 1" aria-hidden="true">
      <path d={`M.5 0v20M24.500 0v${last ? 10 : 20}M24.500 10.500h14`} />
    </svg>
  );
}

function NavTree() {
  return (
    <ul className="min-h-0 flex-1 overflow-hidden border-2 border-[#9a9ca4] border-l-[#b0b0b0] bg-white ml-px mr-0.5">
      {TREE.map((node) => (
        <li key={node.label}>
          <div className="flex h-5 items-center pl-2.5 text-[#111]">
            <Chevron open={Boolean(node.children)} dim={!node.children} />
            <span className="ml-1 w-1 border-t border-dotted border-[#666]" />
            <Icon name={node.children ? 'folderOpen' : 'folder'} />
            <span className="ml-1.5"><Song>{node.label}</Song></span>
          </div>
          {node.children && (
            <ul>
              {node.children.map(([icon, label], i) => (
                <li key={label} className="flex h-5 items-center text-[#111]">
                  <Branch last={i === node.children.length - 1} />
                  <Icon name={icon} />
                  <span className={`ml-0.5 h-5 px-1 leading-5 whitespace-nowrap ${label === '板受力筋(S)' ? 'bg-[#d8d8d8] pr-1.5' : ''}`}>
                    <Song>{label}</Song>
                  </span>
                </li>
              ))}
            </ul>
          )}
        </li>
      ))}
    </ul>
  );
}

function Navigator() {
  return (
    <aside className="flex w-[174px] shrink-0 flex-col">
      <PanelHead title="模块导航栏" active />
      <NavButton>工程设置</NavButton>
      <NavButton>绘图输入</NavButton>
      <div className="flex h-[34px] shrink-0 items-center gap-2 pt-1 pl-2">
        <button type="button" aria-label="全部展开"><Icon name="expand" /></button>
        <button type="button" aria-label="全部折叠"><Icon name="collapse" /></button>
      </div>
      <NavTree />
      <NavButton>单构件输入</NavButton>
      <NavButton>翻样明细</NavButton>
      <NavButton>报表输出</NavButton>
    </aside>
  );
}

function MemberPanels() {
  return (
    <aside className="flex w-[236px] shrink-0 flex-col text-[#111]">
      <PanelHead title="构件列表" />
      <div className="flex h-[34px] shrink-0 items-center border-b border-[#a3a3a3]">
        <Tool icon="addNew" label="新建" caret="tight" />
        <button type="button" aria-label="删除构件" className="ml-1.5"><Icon name="remove" /></button>
        <button type="button" aria-label="复制构件" className="ml-1.5"><Icon name="copyDoc" /></button>
      </div>
      <div className="flex h-[33px] shrink-0 items-center">
        <input type="text" aria-label="搜索构件" placeholder="搜索构件..." className="h-[29px] w-[205px] border-2 border-[#8a8c94] bg-white px-0.5 pb-1 placeholder-[#8a8a8a]" />
        <button type="button" aria-label="搜索" className="ml-1.5"><Icon name="search" /></button>
      </div>
      <ul className="h-[332px] shrink-0 border border-[#8a8c94] bg-white pt-px">
        <li className="flex h-5 items-center pl-[9px]">
          <Chevron open />
          <span className="ml-1 w-2 border-t border-dotted border-[#666]" />
          <Icon name="slabBar" className="size-[18px]" />
          <span className="ml-[5px]">板受力筋</span>
        </li>
        <li className="flex h-5 items-center pl-[38px]">
          <span className="mb-2 h-3 w-[11px] border-b border-l border-dotted border-[#666]" />
          <span className="flex h-5 items-center bg-[#d8d8d8] pl-1 pr-0.5">
            <Icon name="gear" className="size-[15px]" />
            <span className="ml-2 h-5 bg-[#2a5aa8] px-0.5 leading-5 text-white"><Song>SLJ-1</Song></span>
          </span>
        </li>
      </ul>
      <div className="mt-2 flex flex-col">
        <PanelHead title="图纸管理" />
      </div>
      <div className="ml-0.5 mr-1.5 mt-0.5 flex h-1">
        <span className="flex-1 border-b border-[#d0d0d0]" />
        <span className="flex-1 bg-white" />
      </div>
      <div className="mt-1.5 flex flex-col">
        <PanelHead title="CAD图层显示" />
      </div>
      <ul className="mt-0.5 min-h-0 flex-1 border border-[#8a8c94] bg-white">
        {['已提取的CAD图层', 'CAD原始图层'].map((label, i) => (
          <li key={label} className="flex h-[18px] items-center pl-2.5">
            <Chevron dim={i === 1} />
            <span className="ml-1 w-1 border-t border-dotted border-[#666]" />
            <label className="flex items-center leading-[18px] whitespace-nowrap">
              <input type="checkbox" className="ml-0.5 mr-1 h-[14px] w-4 appearance-none border border-[#222] bg-white" />
              <span><Song>{label}</Song></span>
            </label>
          </li>
        ))}
      </ul>
    </aside>
  );
}

/* ---------- Plano ---------- */

const Y_AXES = { E: 468, D: 537, C: 572, B: 615, A: 674 };
const X_TOP = { 1: 492, 2: 512, 3: 565, 4: 648, 5: 683, 9: 734, 10: 771, 11: 853, 12: 907, 13: 925, 14: 944, 15: 998, 16: 1082, 17: 1117, 21: 1168, 22: 1203, 23: 1287, 24: 1340, 25: 1359 };
const X_BOTTOM = { 1: 492, 3: 565, 4: 648, 6: 686, 7: 709, 8: 732, 10: 771, 11: 853, 13: 925, 15: 998, 16: 1082, 18: 1119, 19: 1142, 20: 1166, 22: 1203, 23: 1287, 25: 1359 };
const DIM_TOP = [1000, 2800, 4350, 1850, 2700, 1850, 4350, 2800, 1000, 1000, 2800, 4350, 1850, 2700, 1850, 4350, 2800, 1000];
const DIM_BOTTOM = [3800, 4350, 2000, 1200, 1200, 2000, 4350, 3800, 3800, 4350, 2000, 1200, 1200, 2000, 4350, 3800];
const DIM_SIDE = [[3600, 501], [1800, 553], [2300, 592], [3100, 643]];

const RED_WALLS = [
  ...[492, 565, 648, 771, 853, 925, 998, 1082, 1203, 1287, 1359].map((x) => [x, 468, 674]),
  ...[512, 683, 734, 907, 944, 1117, 1168, 1340].map((x) => [x, 468, 537]),
  ...[686, 732, 1119, 1166].map((x) => [x, 572, 674]),
  [709, 615, 674], [1142, 615, 674],
];

// [x, y, ancho, alto]
const WALLS = [
  [512, 467, 12, 4], [510, 467, 4, 14], [548, 467, 24, 4], [579, 467, 8, 4], [664, 467, 21, 4], [680, 467, 5, 10], [680, 494, 5, 12],
  [677, 534, 8, 5], [733, 467, 20, 4], [733, 467, 4, 14], [733, 494, 4, 12], [733, 534, 8, 5], [832, 467, 7, 4], [845, 467, 25, 4],
  [851, 468, 5, 9], [888, 467, 20, 4], [904, 467, 4, 10], [943, 467, 14, 4], [943, 467, 4, 10], [510, 528, 4, 11], [507, 536, 14, 4],
  [491, 536, 10, 4], [491, 536, 4, 10], [647, 534, 10, 4], [647, 534, 4, 12], [762, 534, 10, 4], [768, 534, 4, 12], [898, 536, 13, 4],
  [904, 528, 4, 10], [922, 536, 8, 4], [924, 536, 4, 10], [941, 536, 14, 4], [942, 528, 4, 10], [491, 559, 4, 16], [562, 571, 4, 9],
  [562, 594, 4, 15], [491, 626, 4, 7], [684, 570, 14, 4], [684, 570, 4, 8], [720, 570, 14, 4], [730, 570, 4, 8], [684, 608, 4, 9],
  [684, 614, 9, 4], [730, 608, 4, 9], [724, 614, 9, 4], [852, 571, 5, 9], [851, 594, 5, 15], [924, 564, 4, 10], [920, 570, 11, 5],
  [924, 626, 4, 7], [706, 645, 5, 7], [981, 467, 25, 4], [995, 468, 5, 9], [1013, 467, 7, 4], [1098, 467, 21, 4], [1114, 467, 5, 10],
  [1114, 494, 5, 12], [1110, 534, 8, 5], [1167, 467, 20, 4], [1167, 467, 4, 10], [1167, 494, 5, 12], [1167, 534, 8, 5], [1265, 467, 7, 4],
  [1279, 467, 25, 4], [1285, 468, 5, 9], [1328, 467, 14, 4], [1338, 467, 4, 14], [1081, 534, 9, 4], [1081, 534, 4, 12], [1195, 534, 10, 4],
  [1201, 534, 4, 12], [1330, 536, 15, 4], [1338, 528, 4, 10], [1350, 536, 11, 4], [1356, 536, 4, 10], [1356, 559, 4, 16],
  [1118, 570, 14, 4], [1118, 570, 4, 8], [1153, 570, 14, 4], [1164, 570, 4, 8], [1118, 608, 4, 9], [1118, 614, 9, 4], [1164, 608, 4, 9],
  [1158, 614, 9, 4], [995, 571, 5, 9], [995, 594, 5, 15], [1285, 571, 5, 9], [1285, 594, 4, 15], [1356, 626, 5, 7], [1140, 645, 5, 7],
];
const COLUMNS = [
  [514, 471, 5, 6], [565, 470, 7, 7], [737, 471, 5, 5], [888, 470, 9, 6], [493, 565, 9, 9], [1043, 467, 8, 9], [1196, 467, 10, 9],
  [1333, 471, 6, 5], [1350, 565, 8, 9], [491, 661, 4, 12], [492, 672, 20, 4], [539, 672, 13, 4], [564, 672, 13, 4], [568, 675, 9, 12],
  [628, 672, 22, 4], [642, 675, 8, 5], [689, 672, 47, 4], [728, 668, 8, 8], [707, 666, 4, 7], [769, 672, 21, 4], [769, 675, 7, 5],
  [842, 672, 9, 4], [842, 673, 4, 14], [865, 672, 26, 4], [881, 668, 10, 7], [907, 672, 39, 4], [924, 666, 4, 7], [971, 672, 15, 4],
  [1000, 672, 11, 4], [1006, 674, 5, 13], [1043, 668, 8, 7], [1061, 672, 22, 4], [1075, 675, 8, 5], [1123, 672, 39, 4], [1140, 666, 5, 7],
  [1201, 672, 22, 4], [1201, 675, 8, 6], [1274, 672, 11, 4], [1274, 674, 5, 13], [1299, 672, 15, 4], [1339, 672, 21, 4], [1352, 668, 8, 6],
  [1356, 661, 4, 13],
];

function AxisMark({ x, y, label }) {
  const pts = Array.from({ length: 12 }, (_, i) => {
    const a = (i * Math.PI) / 6;
    return `${(x + 16 * Math.sin(a)).toFixed(1)},${(y + 16 * Math.cos(a)).toFixed(1)}`;
  }).join(' ');
  return (
    <>
      <polygon points={pts} fill="none" stroke="#0a7a0a" strokeWidth="1.200" />
      <text x={x + 1} y={y + 7}>{label}</text>
    </>
  );
}

function dims(values, axes, y) {
  const xs = Object.values(axes);
  return values.map((v, i) => <text key={i} x={Math.round((xs[i] + xs[i + 1]) / 2) + 2} y={y}>{v}</text>);
}

function Plan() {
  const xt = Object.entries(X_TOP);
  const xb = Object.entries(X_BOTTOM);
  const ys = Object.entries(Y_AXES);
  const ticksX = (xs, y) => xs.map((x) => `M${x - 4} ${y + 4}l8-8`).join('');
  const ticksY = (x) => ys.map(([, y]) => `M${x - 4} ${y - 4}l8 8`).join('');
  return (
    <svg className="block h-full w-full" role="img" aria-label="结构平面图">
      <g transform="translate(-419 -206)">
        <g stroke="#0a6a0a" strokeWidth="1.400" fill="none">
          <path d={xt.map(([, x]) => `M${x} 382V468`).join('')} />
          <path d={xb.map(([, x]) => `M${x} 674V761`).join('')} />
          <path d="M492 410.500H1359M492 439.500H1359M492 703.500H1359M492 732H1359" />
          <path d="M435 468V674M463.500 468V674M1388 468V674M1417 468V674" />
          <path d={ys.map(([, y]) => `M419 ${y}H492M1359 ${y}H1445`).join('')} />
          <path d={ticksX(Object.values(X_TOP), 439) + ticksX(Object.values(X_BOTTOM), 703) + ticksX([492, 1359], 410) + ticksX([492, 1359], 732)} />
          <path d={ticksY(463) + ticksY(1388) + 'M1413 464l8 8M1413 670l8 8'} />
        </g>
        <g fill="#9a00d0">
          {WALLS.map(([x, y, w, h]) => <rect key={`${x}-${y}-${w}`} x={x} y={y} width={w} height={h} />)}
        </g>
        <g fill="#7a00ff">
          {COLUMNS.map(([x, y, w, h]) => <rect key={`${x}-${y}-${w}`} x={x} y={y} width={w} height={h} />)}
        </g>
        <g stroke="#c80c10" strokeWidth="1.200">
          <path d={ys.map(([, y]) => `M492 ${y}H1359`).join('')} />
          <path d={RED_WALLS.map(([x, a, b]) => `M${x} ${a}V${b}`).join('')} />
        </g>
        <g fill="#c8c8c8" fontSize="19" textAnchor="middle" className="font-['Noto_Sans_CJK_SC',sans-serif]">
          {xt.map(([n, x]) => <AxisMark key={`t${n}`} x={x} y={366} label={n} />)}
          {xb.map(([n, x]) => <AxisMark key={`b${n}`} x={x} y={777} label={n} />)}
          {ys.map(([n, y]) => (
            <Fragment key={n}>
              <AxisMark x={435} y={y} label={n} />
              <AxisMark x={1461} y={y} label={n} />
            </Fragment>
          ))}
          <text x="927" y="408">45400</text>
          <text x="927" y="748">45400</text>
          {dims(DIM_TOP, X_TOP, 437)}
          {dims(DIM_BOTTOM, X_BOTTOM, 720)}
          {DIM_SIDE.map(([v, y]) => (
            <Fragment key={v}>
              <text transform={`translate(461 ${y}) rotate(-90)`}>{v}</text>
              <text transform={`translate(1404 ${y}) rotate(-90)`}>{v}</text>
            </Fragment>
          ))}
          <text transform="translate(432 571) rotate(-90)">10800</text>
          <text transform="translate(1432 571) rotate(-90)">10800</text>
        </g>
        <path d="M480 661l25 27M505 661l-25 27" stroke="#e81010" strokeWidth="3" />
        {/* Ejes de coordenadas */}
        <path d="M485 902V854h-3l5.500-13 5.500 13h-3v48z" fill="#0f0" />
        <path d="M488 900h46v-4l15 6.500-15 6.500v-4h-46z" fill="#f00" />
        <text x="499" y="856" fontSize="16" fill="#0c0" className="font-['Noto_Sans_CJK_SC',sans-serif] font-light">Y</text>
        <text x="534" y="888" fontSize="16" fill="#c00" className="font-['Noto_Sans_CJK_SC',sans-serif] font-light">X</text>
      </g>
    </svg>
  );
}

// Trazos a mano alzada por encima de toda la ventana
function Ink() {
  return (
    <svg className="pointer-events-none absolute inset-0 h-full w-full" fill="none" stroke="#f00" strokeWidth="7" strokeLinecap="round" strokeLinejoin="round" aria-hidden="true">
      <path d="M492 401L452 560L432 620L425 657L422 683L422 707L428 727L440 748L464 761L489 771L519 777L553 779L631 779L674 784L724 792L774 799L831 804L881 804L1125 804L1184 802L1240 788L1295 773L1359 758L1418 742L1439 734L1465 720L1483 706L1495 688L1497 672L1495 653L1492 643L1484 625L1478 600L1471 582L1436 557L1388 537L1331 517L1268 498L1208 485L1137 470L1074 457L995 447L900 438L849 434L731 428L639 429Q628 430 623 439L610 433L585 427L525 416" />
      <path d="M224 252L223 258L215 245Q209 230 210 190Q211 172 223 165Q235 158 247 153L263 142Q270 137 280 138L300 139Q318 144 322 160Q326 180 318 213L308 233L302 243L290 242L253 238L235 239" />
      <path d="M55 437Q60 430 70 429L103 419Q135 415 167 417L193 428Q208 437 210 443Q212 455 197 459L167 462Q150 462 133 467Q110 469 93 467L62 460V440" />
    </svg>
  );
}

/* ---------- Parte inferior ---------- */

function SnapBars() {
  return (
    <div className="flex h-9 shrink-0 whitespace-nowrap">
      <Bar>
        <Tools items={[{ icon: 'ortho', label: '正交', pressed: true }, { icon: 'snap', label: '对象捕捉', pressed: true }, { icon: 'dynInput', label: '动态输入' }]} />
      </Bar>
      <Bar>
        <Tools
          items={[
            { icon: 'cross', label: '交点' }, { icon: 'perp', label: '垂点', pressed: true }, { icon: 'mid', label: '中点', pressed: true },
            { icon: 'vertex', label: '顶点', pressed: true }, { icon: 'coord', label: '坐标' },
          ]}
        />
      </Bar>
      <Bar>
        <Combo label="偏移方式" value="不偏移" width="w-[68px]" />
        <Sep />
        <span className="text-[#9a9a9a]">X=</span>
        <Spin label="X" value="0" width="w-[71px]" />
        <span className="mr-1 text-[#9a9a9a]">mm</span>
        <span className="text-[#9a9a9a]">Y=</span>
        <Spin label="Y" value="0" width="w-[71px]" />
        <span className="text-[#9a9a9a]">mm</span>
        <Sep />
        <label className="mr-1 flex items-center">
          <input type="checkbox" className="mr-2.5 size-[14px] appearance-none border border-[#a3a3a3] bg-white" />
          旋转
        </label>
        <Spin label="旋转角度" value="0.000" width="w-[83px]" />
        <span className="pr-0.5 text-[#9a9a9a]">°</span>
      </Bar>
    </div>
  );
}

function StatusBar() {
  const cell = 'h-7 shrink-0 border border-t-[#8c8c8c] border-l-[#a3a3a3] border-r-white border-b-white pl-0.5 leading-[22px] whitespace-nowrap';
  return (
    <footer className="flex h-[11px] shrink-0 items-start gap-[3px] overflow-hidden text-[#111]">
      <div className={`${cell} w-[185px]`}><Song>X=-8250 Y=14454</Song></div>
      <div className={`${cell} w-[97px]`}><Song>层高:2.7</Song></div>
      <div className={`${cell} w-[122px]`}><Song>底标高:-0.05</Song></div>
      <div className={`${cell} w-[60px]`}><Song>0</Song></div>
      <div className={`${cell} flex-1`}><Song>名称在当前层当前构件类型下不允许重名</Song></div>
    </footer>
  );
}

function ImeBar() {
  return (
    <div className="absolute bottom-0 right-0 flex h-[24px] items-end overflow-hidden" aria-label="输入法">
      <svg className="-mr-2 h-[24px] w-[40px]" viewBox="0 0 40 24" aria-hidden="true">
        <path d="M1 7L30 0l8 24H4z" fill="#f0602c" />
        <path d="M30 9Q10 6 10 14q0 5 14 5 6 1 5 5" stroke="#fff" strokeWidth="4.500" fill="none" />
      </svg>
      <div className="flex h-[17px] items-start gap-[13px] border-t border-[#a8c4dc] bg-white pl-4 pt-[6px] text-[#0b6bd0]">
        <span className="text-[17px] leading-[19px] font-bold">中</span>
        <svg className="h-[18px] w-[206px]" viewBox="0 0 206 18" fill="#0b6bd0" aria-hidden="true">
          <path d="M13 1q8 9-4 16h-4Q16 12 13 1z" />
          <circle cx="34" cy="7" r="2.500" fill="none" stroke="#0b6bd0" strokeWidth="1.500" />
          <path d="M42 9h4v3h-4z" />
          <rect x="65" width="7" height="12" rx="3.500" />
          <path d="M62 7q0 6 6.500 6T75 7" fill="none" stroke="#0b6bd0" strokeWidth="1.500" />
          <path d="M90 3h18v14H90z" />
          <path d="M92 6.500h14M92 10h14" stroke="#fff" strokeWidth="1.500" strokeDasharray="2 1.500" />
          <path d="M119 3l5-2q4 3 8 0l6 2v6h-3v8h-13V9h-3z" />
          <rect x="182" y="4" width="9" height="8" rx="2" /><circle cx="197" cy="8" r="4.500" />
          <path d="M151 1l12 16M164 1l-12 16" stroke="#0b6bd0" strokeWidth="2" />
        </svg>
      </div>
    </div>
  );
}

export default function App() {
  return (
    <div className={`relative flex h-screen flex-col overflow-hidden bg-[#f0f0f0] text-[15px] leading-5 ${UI}`}>
      <TitleBar />
      <nav className="flex h-8 shrink-0 items-center gap-2 border-b border-[#a3a3a3] pl-1.5">
        <span className="h-[26px] w-[2px] border-r border-[#a3a3a3]" />
        <div className={`flex gap-[13px] ${CJK}`}>
          {MENUS.map((m) => <button key={m} type="button" className="whitespace-pre text-[#222]">{m}</button>)}
        </div>
      </nav>
      <div className="flex shrink-0">
        <Bar className="w-[190px] shrink-0"><Tools items={FILE_TOOLS} /><More /></Bar>
        <Bar className="w-[878px] shrink-0"><Tools items={DATA_TOOLS} /><More /></Bar>
        <Bar className="min-w-0 flex-1">
          <Combo label="视图维度" value="二维" width="w-[73px]" icon="rect2d" />
          <Tools items={VIEW_TOOLS} />
        </Bar>
      </div>

      <div className="flex min-h-0 flex-1 pb-0.5">
        <div className={`flex shrink-0 gap-[5px] pt-[3px] ${CJK}`}>
          <Navigator />
          <MemberPanels />
        </div>
        <main className="ml-1 mr-px flex min-w-0 flex-1 flex-col pb-px">
          <div className="flex shrink-0 pl-[156px]">
            <Bar><Tools items={EDIT_TOOLS} /></Bar>
          </div>
          <div className="flex shrink-0">
            <Bar>
              <Combo label="楼层" value="基础层" width="w-[68px]" />
              <Combo label="构件大类" value="板" width="w-[83px]" />
              <Combo label="构件类型" value="板受力筋" width="w-[83px]" />
              <Combo label="构件" value="SLJ-1" width="w-[83px]" />
              <Combo label="分层" value="分层板1" width="w-[83px]" />
              <Tools items={MEMBER_TOOLS} />
            </Bar>
            <Bar><Tools items={AXIS_TOOLS} /></Bar>
          </div>
          <Bar className="shrink-0">
            <Tools items={DRAW_TOOLS_A} />
            <Combo label="画弧方式" value="" width="w-[67px]" muted />
            <Tools items={DRAW_TOOLS_B} />
            <More />
          </Bar>
          <div className="min-h-0 flex-1 overflow-hidden bg-black"><Plan /></div>
          <SnapBars />
        </main>
      </div>

      <div className={`shrink-0 ${CJK}`}><StatusBar /></div>
      <Ink />
      <ImeBar />
    </div>
  );
}
